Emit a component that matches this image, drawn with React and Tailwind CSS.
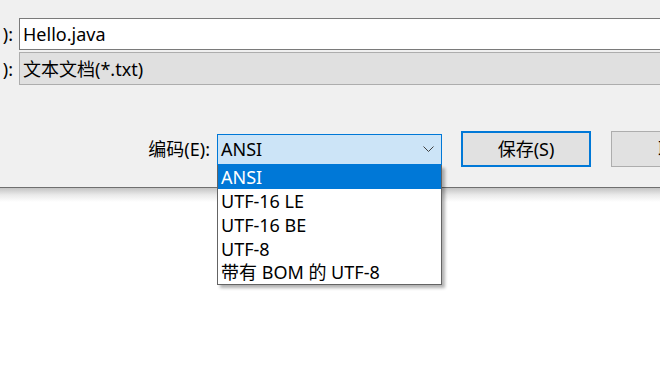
export default function App() {
  return (
    <div className="w-[660px] h-[378px] bg-white overflow-hidden relative text-[18px] text-black font-['Noto_Sans','Noto_Sans_CJK_SC',sans-serif] leading-none">
      <div className="h-[188px] bg-[#f0f0f0] border-b border-[#6f6f6f] pt-[18px] relative z-10">
        <div className="flex flex-col gap-[2px]">
          <div className="flex items-center">
            <div className="w-[13px] shrink-0 flex justify-end whitespace-nowrap">):</div>
            <div className="ml-[6px] w-[720px] h-[32px] shrink-0 border border-[#7a7a7a] bg-white flex items-center px-[3px]">Hello.java</div>
          </div>
          <div className="flex items-center">
            <div className="w-[13px] shrink-0 flex justify-end whitespace-nowrap">):</div>
            <div className="ml-[6px] w-[720px] h-[33px] shrink-0 border border-[#adadad] bg-[#e0e0e0] flex items-center px-[3px]">文本文档(*.txt)</div>
          </div>
        </div>
        <div className="mt-[46px] flex items-center">
          <div className="w-[210px] shrink-0 flex justify-end whitespace-nowrap">编码(E):</div>
          <div className="ml-[7px] relative w-[225px] h-[31px] shrink-0">
            <div className="h-full border border-[#0078d7] bg-[#cce4f7] flex items-center justify-between pl-[3px] pr-[7px]">
              <span>ANSI</span>
              <svg width="11" height="7" viewBox="0 0 11 7" fill="none">
                <polyline points="0.5,0.5 5.5,5.5 10.5,0.5" stroke="#404040" strokeWidth="1" />
              </svg>
            </div>
            <div className="absolute left-0 top-full w-[225px] bg-white border border-t-0 border-[#646464] shadow-[3px_3px_3px_rgba(0,0,0,0.3)] flex flex-col">
              <div className="h-[24px] bg-[#0078d7] text-white flex items-center px-[3px]">ANSI</div>
              <div className="h-[24px] flex items-center px-[3px]">UTF-16 LE</div>
              <div className="h-[24px] flex items-center px-[3px]">UTF-16 BE</div>
              <div className="h-[24px] flex items-center px-[3px]">UTF-8</div>
              <div className="h-[23px] flex items-center px-[3px]">带有 BOM 的 UTF-8</div>
            </div>
          </div>
          <div className="ml-[19px] w-[130px] h-[36px] shrink-0 border-2 border-[#0078d7] bg-[#e1e1e1] flex items-center justify-center">保存(S)</div>
          <div className="ml-[20px] w-[130px] h-[36px] shrink-0 border border-[#adadad] bg-[#e1e1e1] flex items-center justify-center">取消</div>
        </div>
      </div>
      <div className="h-[14px] bg-gradient-to-b from-[#c4c4c4] via-[#eaeaea] to-white"></div>
    </div>
  );
}
